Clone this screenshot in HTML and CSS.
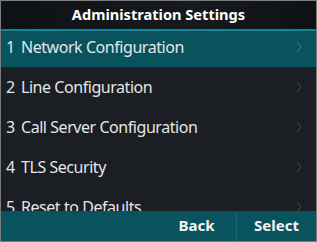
FILE: index.html
```html
<!DOCTYPE html>
<html lang="en">
<head>
    <meta charset="UTF-8">
    <title>Administration Settings</title>
    <link rel="stylesheet" href="styles.css">
</head>
<body>

    <div class="screen">
        <div class="title">Administration Settings</div>
        <div class="menu">
            <div class="row selected"><span><span class="num">1</span>Network Configuration</span><svg class="chev" viewBox="0 0 6 12"><path d="M1 1 L5 6 L1 11"/></svg></div>
            <div class="row"><span><span class="num">2</span>Line Configuration</span><svg class="chev" viewBox="0 0 6 12"><path d="M1 1 L5 6 L1 11"/></svg></div>
            <div class="row"><span><span class="num">3</span>Call Server Configuration</span><svg class="chev" viewBox="0 0 6 12"><path d="M1 1 L5 6 L1 11"/></svg></div>
            <div class="row"><span><span class="num">4</span>TLS Security</span><svg class="chev" viewBox="0 0 6 12"><path d="M1 1 L5 6 L1 11"/></svg></div>
            <div class="row"><span><span class="num">5</span>Reset to Defaults</span><svg class="chev" viewBox="0 0 6 12"><path d="M1 1 L5 6 L1 11"/></svg></div>
        </div>
        <div class="softkeys">
            <div class="key">Back</div>
            <div class="key">Select</div>
        </div>
    </div>

</body>
</html>
```

FILE: styles.css
```css
html, body {
    margin: 0;
    padding: 0;
    background-color: #1b1e22;
}
.screen {
    width: 317px;
    height: 242px;
    box-sizing: border-box;
    border: 1px solid #7a7c7e;
    background-color: #1b1e22;
    display: flex;
    flex-direction: column;
    font-family: "Noto Sans", "Open Sans", sans-serif;
    overflow: hidden;
}
.title {
    height: 28px;
    line-height: 27px;
    flex-shrink: 0;
    text-align: center;
    color: #ffffff;
    font-size: 14.6px;
    font-weight: bold;
    background: linear-gradient(100deg, #0f1215 0%, #16191d 60%, #0f1215 100%);
    border-bottom: 2px solid #0a8799;
}
.menu {
    flex: 1;
    overflow: hidden;
}
.row {
    height: 40px;
    display: flex;
    align-items: center;
    justify-content: space-between;
    padding: 0 14px 0 5px;
    color: #e4e6e7;
    font-size: 16px;
    letter-spacing: -0.45px;
    white-space: nowrap;
}
.num {
    display: inline-block;
    width: 15px;
}
.row:first-child {
    height: 36px;
    padding-bottom: 4px;
    box-sizing: border-box;
}
.row.selected {
    background-color: #08535e;
}
.chev {
    width: 6px;
    height: 12px;
    fill: none;
    stroke: #3b4347;
    stroke-width: 1.2;
}
.selected .chev {
    stroke: #2c7883;
}
.softkeys {
    height: 30px;
    flex-shrink: 0;
    display: flex;
    justify-content: flex-end;
    background-color: #08535e;
}
.key {
    width: 79px;
    line-height: 29px;
    text-align: center;
    color: #f2f4f4;
    font-size: 15px;
    font-weight: bold;
}
.key + .key {
    border-left: 1px solid #156974;
}
```
